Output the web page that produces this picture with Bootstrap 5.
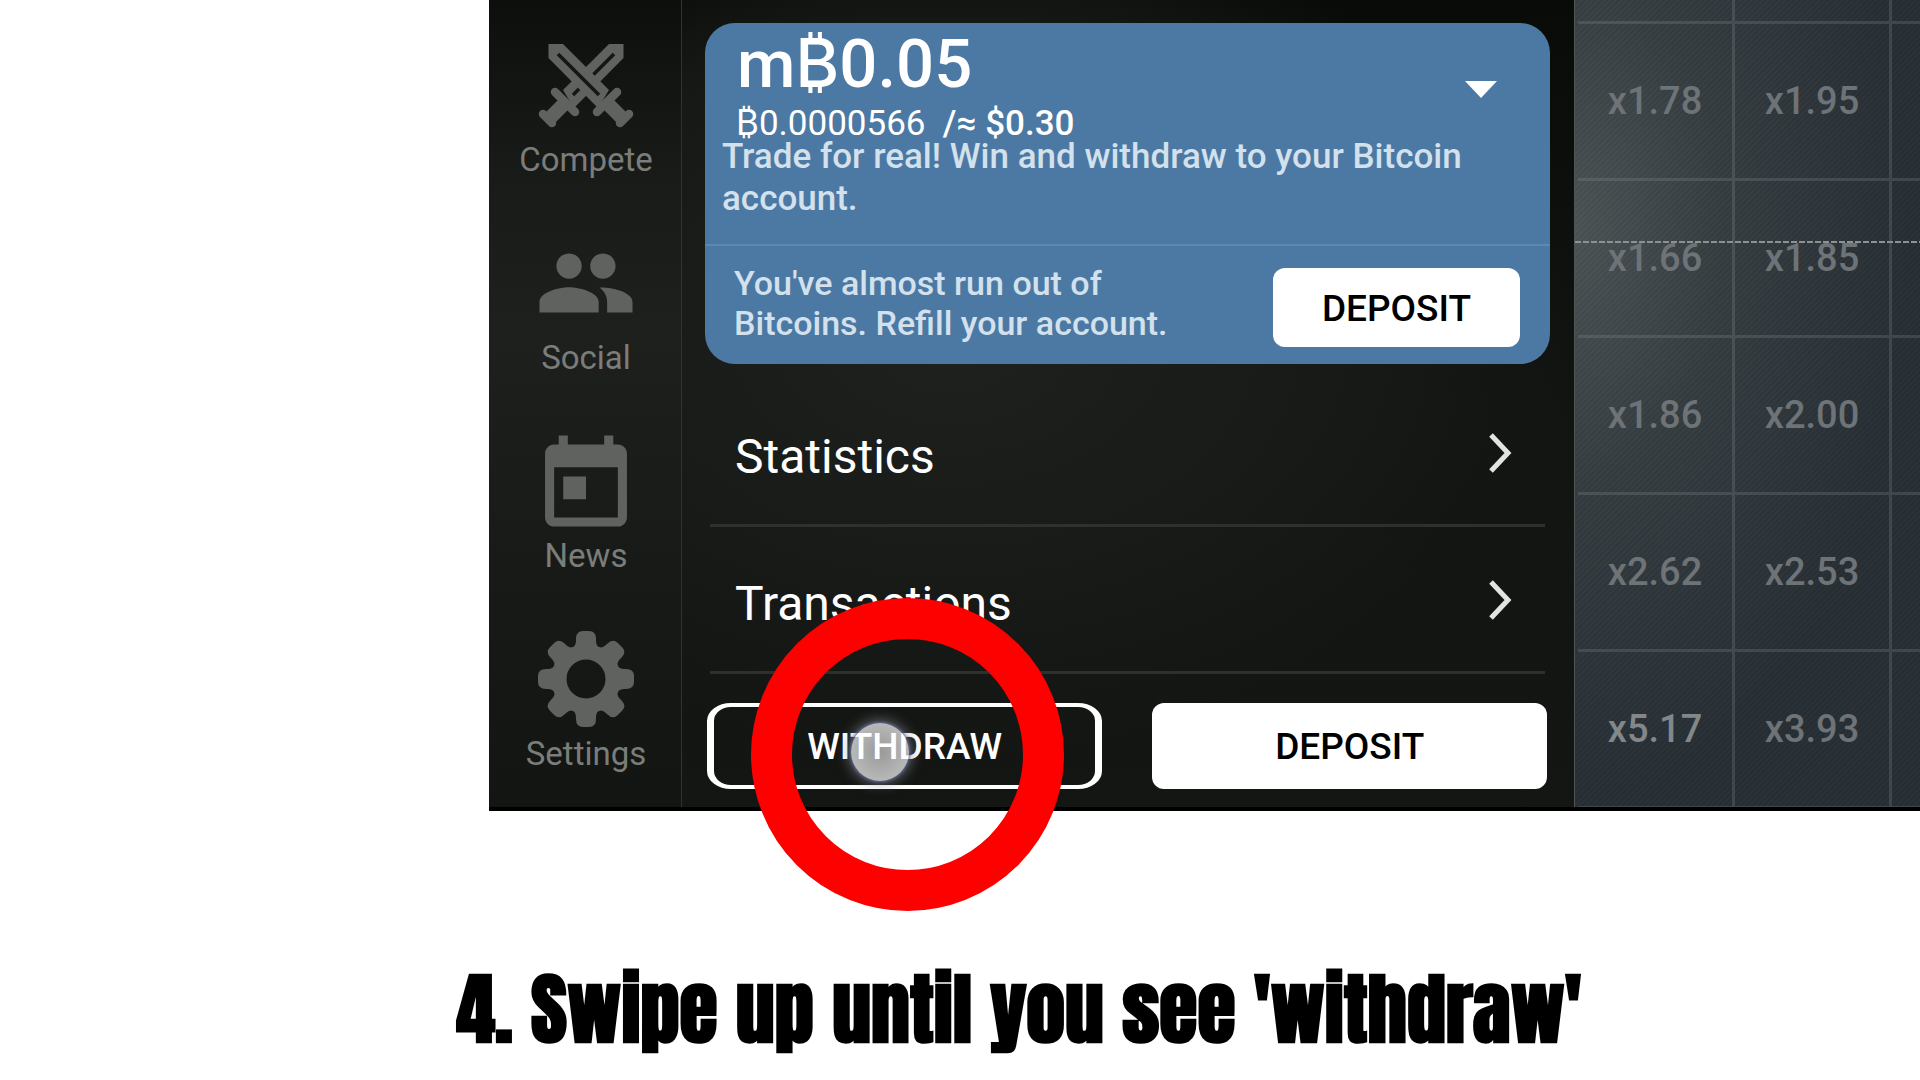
<!DOCTYPE html>
<html lang="en">
<head>
<meta charset="utf-8">
<meta name="viewport" content="width=device-width, initial-scale=1">
<title>Withdraw guide - step 4</title>
<link href="https://cdn.jsdelivr.net/npm/bootstrap@5.3.0/dist/css/bootstrap.min.css" rel="stylesheet">
<style>
body { font-family: Roboto, Inter, "Liberation Sans", sans-serif; background: #fff; color: #fff; }
.step { overflow: hidden; min-height: 100vh; }
.app-screen { margin-left: 489px; border-bottom: 4px solid #000; background: #141613; }

/* side navigation */
.side-nav { flex: 0 0 193px; padding: 37px 0 0 2px; gap: 55px; border-right: 1px solid #303230;
  background: linear-gradient(#0c0f0c, #191b19 180px, #1e201e 330px, #181a18 560px, #131512); }
.side-link { gap: 7px; font-size: 33px; line-height: 40px; color: #7b7d7a; text-decoration: none; }
.side-link svg { width: 96px; height: 96px; color: #60625f; }

/* account panel */
.panel { padding: 23px 24px 18px 23px;
  background: radial-gradient(ellipse 620px 420px at 30% 42%, #1f211f, #161815 75%, #0a0c0900 100%), linear-gradient(#090b09, #121411 50%, #141613); }
.wallet { background: #4c79a4; border-radius: 30px; overflow: hidden; }
.wallet-top { padding: 1px 17px 24px; border-bottom: 2px solid #5f88b0; }
.amount { font-size: 67px; line-height: 80px; font-weight: 500; padding-left: 15px; }
.converted { font-size: 35px; line-height: 24px; margin-top: 8px; padding-left: 14px; white-space: pre; }
.converted span { font-weight: 500; }
.soft { font-size: 34px; line-height: 42px; font-weight: 500; color: #d3e1ec; }
.wallet-top .soft { font-size: 35px; }
.wallet-foot { padding: 17px 30px 17px 29px; }
.wallet-foot .soft { line-height: 40px; }
.toggle { width: 32px; height: 17px; margin: 57px 36px 0 0; padding: 0; border: 0; background: #fff; clip-path: polygon(0 0, 100% 0, 50% 100%); }
.act { font-size: 37px; line-height: 44px; font-weight: 500; border-radius: 12px; height: 86px; padding: 2px 0 0; }
.act-light, .act-light:hover { background: #fff; color: #000; border: 0; }
.act-small { width: 247px; height: 79px; margin-top: 5px; }
.act-line { color: #fff; border: solid #fff; border-width: 4px 7px; border-radius: 24px / 18px; }
.menu { margin: 16px 5px 0; }
.menu-row { padding: 49px 33px 39px 25px; border-bottom: 3px solid #2e302e; font-size: 48px; line-height: 56px; color: #fff; text-decoration: none; }
.menu-row svg { width: 24px; height: 40px; margin-top: 4px; }
.actions { margin: 29px 3px 0 2px; gap: 50px; }

/* multiplier board */
.board { flex: 0 0 346px; overflow: hidden; padding-left: 3px; position: relative; border-left: 1px solid #4d5556;
  background: repeating-linear-gradient(135deg, #ffffff04 0 2px, #00000008 2px 4px), radial-gradient(ellipse 330px 560px at 0 230px, #4b5355, #353d41 45%, #272f35 100%); }
.board-grid { display: grid; grid-template-columns: repeat(3, 157px); grid-template-rows: 24px repeat(5, 157px); margin-bottom: -3px; }
.board-grid div { border: solid #90a0a038; border-width: 0 3px 3px 0; font-size: 38px; line-height: 44px; font-weight: 500; color: #6d7376; display: flex; align-items: center; justify-content: center; }
.board-grid .hot { color: #82878a; }
.rate-line { position: absolute; left: 0; right: 0; top: 241px; height: 2px; background: repeating-linear-gradient(90deg, #8b9293 0 6px, transparent 6px 8px); }

/* pointers drawn over the screen */
.ring { position: absolute; left: 751px; top: 598px; width: 313px; height: 313px; border: 41px solid #fd0000; border-radius: 50%; pointer-events: none; }
.touch { position: absolute; left: 851px; top: 723px; width: 58px; height: 58px; border-radius: 50%; pointer-events: none;
  background: radial-gradient(#ffffff90, #ffffffc0); box-shadow: 0 0 3px 1px #5d679c, 0 0 12px 4px #9096a080; }

.caption-line { margin: 148px 0 0 118px; font-family: Impact, Anton, "Roboto Condensed", "Liberation Sans Narrow", Roboto, sans-serif; font-weight: 900; font-size: 78px; line-height: 100px; color: #000; text-align: center; white-space: nowrap; }
</style>
</head>
<body>
<main class="step position-relative">
  <section class="app-screen d-flex">
    <nav class="side-nav d-flex flex-column align-items-center">
      <a class="side-link d-flex flex-column align-items-center" href="#">
        <svg viewBox="0 0 96 96" aria-hidden="true">
          <defs><g id="sword">
            <path d="M10.500 7H25L71 53 60 71 10.500 21Z" fill="currentColor"/>
            <path d="M20 17 61 58" stroke="#151714" stroke-width="3.500"/>
            <path d="M68 65 84 81" stroke="currentColor" stroke-width="14"/>
            <path d="M59 75 79 55M82 86 91 77" stroke="currentColor" stroke-width="8.500" stroke-linecap="round"/>
          </g></defs>
          <use href="#sword" transform="matrix(-1 0 0 1 96 0)"/><use href="#sword"/>
        </svg>Compete</a>
      <a class="side-link d-flex flex-column align-items-center" href="#">
        <svg viewBox="0.650 0.650 22.700 22.700" aria-hidden="true" fill="currentColor"><path d="M16 11c1.660 0 2.990-1.340 2.990-3S17.660 5 16 5s-3 1.340-3 3 1.340 3 3 3zM8 11c1.660 0 2.990-1.340 2.990-3S9.660 5 8 5 5 6.340 5 8s1.340 3 3 3zm0 2c-2.330 0-7 1.170-7 3.500V19h14v-2.500C15 14.170 10.330 13 8 13zm7.200.050C16.300 13.900 17 15 17 16.500V19h6v-2.500c0-2.200-4.300-3.500-7.800-3.450z"/></svg>Social</a>
      <a class="side-link d-flex flex-column align-items-center" href="#">
        <svg viewBox="1.450 0.450 21.100 21.100" aria-hidden="true" fill="currentColor"><path d="M19 3h-1V1h-2v2H8V1H6v2H5C3.900 3 3 3.900 3 5v14c0 1.100.900 2 2 2h14c1.100 0 2-.900 2-2V5c0-1.100-.900-2-2-2zm0 16H5V8h14v11zM7 10h5v5H7z"/></svg>News</a>
      <a class="side-link d-flex flex-column align-items-center" href="#">
        <svg viewBox="0 0 96 96" aria-hidden="true" fill="currentColor">
          <defs><path id="tooth" d="M34 17C38 15 38 11 38 8Q38 0 45 0H51Q58 0 58 8C58 11 58 15 62 17L58 24H38Z"/></defs>
          <circle cx="48" cy="48" r="27" fill="none" stroke="currentColor" stroke-width="15"/>
          <use href="#tooth"/><use href="#tooth" transform="rotate(45 48 48)"/><use href="#tooth" transform="rotate(90 48 48)"/><use href="#tooth" transform="rotate(135 48 48)"/><use href="#tooth" transform="rotate(180 48 48)"/><use href="#tooth" transform="rotate(225 48 48)"/><use href="#tooth" transform="rotate(270 48 48)"/><use href="#tooth" transform="rotate(315 48 48)"/>
        </svg>Settings</a>
    </nav>

    <div class="panel flex-grow-1">
      <div class="wallet">
        <div class="wallet-top">
          <div class="d-flex justify-content-between align-items-start">
            <div class="amount">m₿0.05</div>
            <button class="toggle" type="button" aria-label="Choose account"></button>
          </div>
          <div class="converted">₿0.0000566  <span>/≈ $0.30</span></div>
          <div class="soft">Trade for real! Win and withdraw to your Bitcoin account.</div>
        </div>
        <div class="wallet-foot d-flex justify-content-between align-items-start">
          <div class="soft">You've almost run out of<br>Bitcoins. Refill your account.</div>
          <button class="btn act act-light act-small" type="button">DEPOSIT</button>
        </div>
      </div>
      <div class="menu">
        <a class="menu-row d-flex justify-content-between align-items-start" href="#">Statistics
          <svg viewBox="0 0 24 40" aria-hidden="true"><path d="M3 2 20 20 3 38" fill="none" stroke="#e2e4e1" stroke-width="5"/></svg></a>
        <a class="menu-row d-flex justify-content-between align-items-start" href="#">Transactions
          <svg viewBox="0 0 24 40" aria-hidden="true"><path d="M3 2 20 20 3 38" fill="none" stroke="#e2e4e1" stroke-width="5"/></svg></a>
      </div>
      <div class="actions d-flex">
        <button class="btn act act-line flex-fill w-50" type="button">WITHDRAW</button>
        <button class="btn act act-light flex-fill w-50" type="button">DEPOSIT</button>
      </div>
    </div>

    <div class="board">
      <div class="board-grid">
        <div></div><div></div><div></div>
        <div>x1.78</div><div>x1.95</div><div></div>
        <div>x1.66</div><div>x1.85</div><div></div>
        <div>x1.86</div><div>x2.00</div><div></div>
        <div>x2.62</div><div>x2.53</div><div></div>
        <div class="hot">x5.17</div><div>x3.93</div><div></div>
      </div>
      <div class="rate-line"></div>
    </div>
  </section>

  <div class="touch"></div>
  <div class="ring"></div>
  <p class="caption-line">4. Swipe up until you see 'withdraw'</p>
</main>
<script src="https://cdn.jsdelivr.net/npm/bootstrap@5.3.0/dist/js/bootstrap.bundle.min.js"></script>
</body>
</html>
